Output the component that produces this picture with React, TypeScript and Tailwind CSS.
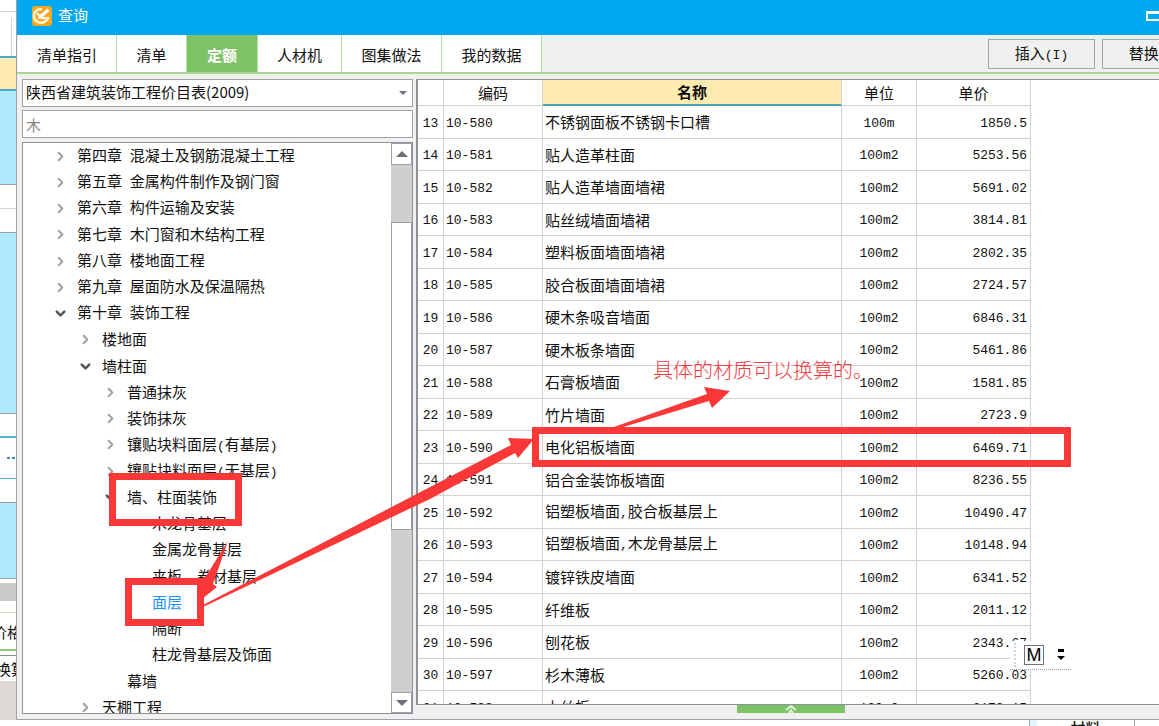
import React, { useState } from 'react';
import { ChevronDown, ChevronRight } from 'lucide-react';
import clsx from 'clsx';

interface TreeNode {
  label: string;
  level: number;
  state?: 'open' | 'closed';
}

const tabs = [
  { label: '清单指引', width: 'w-[99px]' },
  { label: '清单', width: 'w-[70px]' },
  { label: '定额', width: 'w-[71px]' },
  { label: '人材机', width: 'w-[84px]' },
  { label: '图集做法', width: 'w-[100px]' },
  { label: '我的数据', width: 'w-[100px]' },
];

const tree: TreeNode[] = [
  { label: '第四章 混凝土及钢筋混凝土工程', level: 0, state: 'closed' },
  { label: '第五章 金属构件制作及钢门窗', level: 0, state: 'closed' },
  { label: '第六章 构件运输及安装', level: 0, state: 'closed' },
  { label: '第七章 木门窗和木结构工程', level: 0, state: 'closed' },
  { label: '第八章 楼地面工程', level: 0, state: 'closed' },
  { label: '第九章 屋面防水及保温隔热', level: 0, state: 'closed' },
  { label: '第十章 装饰工程', level: 0, state: 'open' },
  { label: '楼地面', level: 1, state: 'closed' },
  { label: '墙柱面', level: 1, state: 'open' },
  { label: '普通抹灰', level: 2, state: 'closed' },
  { label: '装饰抹灰', level: 2, state: 'closed' },
  { label: '镶贴块料面层(有基层)', level: 2, state: 'closed' },
  { label: '镶贴块料面层(无基层)', level: 2, state: 'closed' },
  { label: '墙、柱面装饰', level: 2, state: 'open' },
  { label: '木龙骨基层', level: 3 },
  { label: '金属龙骨基层', level: 3 },
  { label: '夹板、卷材基层', level: 3 },
  { label: '面层', level: 3 },
  { label: '隔断', level: 3 },
  { label: '柱龙骨基层及饰面', level: 3 },
  { label: '幕墙', level: 2 },
  { label: '天棚工程', level: 1, state: 'closed' },
];

const rows = [
  ['13', '10-580', '不锈钢面板不锈钢卡口槽', '100m', '1850.5'],
  ['14', '10-581', '贴人造革柱面', '100m2', '5253.56'],
  ['15', '10-582', '贴人造革墙面墙裙', '100m2', '5691.02'],
  ['16', '10-583', '贴丝绒墙面墙裙', '100m2', '3814.81'],
  ['17', '10-584', '塑料板面墙面墙裙', '100m2', '2802.35'],
  ['18', '10-585', '胶合板面墙面墙裙', '100m2', '2724.57'],
  ['19', '10-586', '硬木条吸音墙面', '100m2', '6846.31'],
  ['20', '10-587', '硬木板条墙面', '100m2', '5461.86'],
  ['21', '10-588', '石膏板墙面', '100m2', '1581.85'],
  ['22', '10-589', '竹片墙面', '100m2', '2723.9'],
  ['23', '10-590', '电化铝板墙面', '100m2', '6469.71'],
  ['24', '10-591', '铝合金装饰板墙面', '100m2', '8236.55'],
  ['25', '10-592', '铝塑板墙面,胶合板基层上', '100m2', '10490.47'],
  ['26', '10-593', '铝塑板墙面,木龙骨基层上', '100m2', '10148.94'],
  ['27', '10-594', '镀锌铁皮墙面', '100m2', '6341.52'],
  ['28', '10-595', '纤维板', '100m2', '2011.12'],
  ['29', '10-596', '刨花板', '100m2', '2343.67'],
  ['30', '10-597', '杉木薄板', '100m2', '5260.03'],
  ['31', '10-598', '木丝板', '100m2', '6173.15'],
];

const indents = ['pl-[30px]', 'pl-[55px]', 'pl-[80px]', 'pl-[105px]'];

// latin runs use the narrow fixed-width face, chinese keeps the page font
const Mixed: React.FC<{ text: string }> = ({ text }) => (
  <span className="whitespace-pre">
    {text.split(/([ -~]+)/).map((part, i) =>
      i % 2 ? <span key={i} className="font-['Liberation_Mono',monospace] text-[13px]">{part}</span> : part
    )}
  </span>
);

const Backdrop: React.FC = () => (
  <div className="flex w-4 shrink-0 flex-col overflow-hidden whitespace-nowrap bg-white">
    <div className="h-3 border-b border-gray-300" />
    <div className="h-11 pt-1.5"><div className="ml-[11px] h-full border-l border-gray-300" /></div>
    <div className="h-[35px] border-y-2 border-[#4aa8d0] bg-[#fdebb0]" />
    <div className="h-[94px] border-b border-gray-400 bg-[#aee8fb]" />
    <div className="h-6 border-b border-gray-300" />
    <div className="h-6 border-b border-gray-400" />
    <div className="h-[181px] border-b border-gray-400 bg-[#aee8fb]" />
    <div className="h-6 border-b-2 border-[#5cb1d8]" />
    <div className="flex h-[41px] items-center justify-end gap-0.5 border-b border-[#5cb1d8] pr-px">
      <i className="h-0.5 w-[3px] bg-[#4a90c8]" />
      <i className="h-0.5 w-[3px] bg-[#4a90c8]" />
    </div>
    <div className="h-6 border-b border-gray-400" />
    <div className="h-[76px] border-b border-gray-400 bg-[#aee8fb]" />
    <div className="mt-1 h-[18px] bg-[#c9c9c9]" />
    <div className="h-3 border-b border-[#cfe5b8]" />
    <div className="h-[38px] border-b-2 border-[#8fca7a] text-[15px] leading-[38px]"><span className="-ml-2">价格</span></div>
    <div className="mt-1 h-[26px] border-t border-[#8c8ca0] text-[15px] leading-[26px]"><span className="-ml-1">换算</span></div>
    <div className="flex-1 bg-[#dcd9d6]" />
  </div>
);

const TitleBar: React.FC = () => (
  <header className="flex h-[35px] shrink-0 items-center bg-[#00a8f0] pl-[15px] text-white">
    <svg viewBox="0 0 20 20" className="-mt-1 mr-1.5 size-5">
      <rect width="20" height="20" rx="3" fill="#f5a623" />
      <path d="M10 3.5C5 2.500 1.500 6 2 10.500C2.500 15.500 7.500 18 12 16C14.500 15 16 13 16.500 11" fill="none" stroke="#fff3d0" strokeWidth="2.500" />
      <path d="M7 9.500L15.500 2.500L17.500 5L9 12.500L6 13Z" fill="#fff" />
      <path d="M5 7L8 10.500M9 12L14 12" stroke="#fff" strokeWidth="2" />
    </svg>
    <h1 className="-mt-1 text-[15px]">查询</h1>
    <button aria-label="最大化" className="-mr-1 -mt-1 ml-auto h-2.5 w-[17px] border-2 border-t-[3px] border-white" />
  </header>
);

const ScrollBar: React.FC = () => (
  <div className="flex w-[21px] shrink-0 flex-col bg-[#cfcfcf]">
    <button aria-label="向上" className="flex h-[22px] items-center justify-center border border-gray-400 bg-white">
      <i className="border-x-[6px] border-b-[6px] border-x-transparent border-b-[#6d6f7a]" />
    </button>
    <div className="h-[57px]" />
    <div className="h-[308px] border border-gray-400 bg-white" />
    <button aria-label="向下" className="mt-auto flex h-[21px] items-center justify-center border border-gray-400 bg-white">
      <i className="border-x-[6px] border-t-[6px] border-x-transparent border-t-[#6d6f7a]" />
    </button>
  </div>
);

const Annotations: React.FC = () => (
  <div className="pointer-events-none absolute inset-0">
    <div className="absolute left-[109px] top-[473px] h-[53px] w-[133px] border-[7px] border-[#fb3838]" />
    <div className="absolute left-[125px] top-[578px] h-12 w-[79px] border-[7px] border-[#fb3838]" />
    <div className="absolute left-[532px] top-[427px] h-10 w-[539px] border-[7px] border-[#fb3838]" />
    <svg width="760" height="640" className="absolute left-0 top-0" fill="#fb3838">
      <path d="M228 541L213 584L217 587L202 599L202 578L206 576Z" />
      <path d="M203 605L511 445L508 438L534 439L518 458L515 453L430 499L203 607Z" />
      <path d="M611 428L707 394L704 387L730 391L712 408L709 401L620 428Z" />
    </svg>
    <p className="absolute left-[653px] top-[355px] whitespace-nowrap text-xl font-light leading-[30px] text-[#f03a40]">具体的材质可以换算的。</p>
  </div>
);

const ImeBar: React.FC = () => (
  <div className="absolute left-[1010px] top-[641px] flex h-[29px] w-[61px] items-center border-b border-dotted border-gray-400 bg-white pl-1">
    <div className="h-6 border-l-2 border-dotted border-gray-300" />
    <div className="ml-2 flex size-5 items-center justify-center border border-gray-500 font-['Liberation_Sans',sans-serif] text-lg text-black">M</div>
    <svg width="8" height="12" className="ml-[13px]">
      <path d="M1 0H7V3H1ZM0 7H8L4 11Z" fill="#000" />
    </svg>
  </div>
);

const App: React.FC = () => {
  const [activeTab, setActiveTab] = useState('定额');
  const [selected, setSelected] = useState('面层');
  const [keyword, setKeyword] = useState('');

  return (
    <div className="relative flex h-screen flex-col overflow-hidden bg-white font-['Noto_Sans_CJK_SC',sans-serif] text-[15px] text-[#111]">
      <div className="flex min-h-0 flex-1">
        <Backdrop />
        <main className="flex min-w-0 flex-1 flex-col overflow-hidden border-b border-l border-[#a0a0a8] bg-[#f0f0f0]">
          <TitleBar />

          <div className="flex h-[39px] shrink-0 items-stretch border-b-2 border-[#add59a]">
            <nav className="flex shrink-0 pl-px">
              {tabs.map((tab) => (
                <button
                  key={tab.label}
                  onClick={() => setActiveTab(tab.label)}
                  className={clsx(
                    'border-r border-[#b5dfa5] pt-1',
                    tab.width,
                    activeTab === tab.label ? 'bg-[#7ec268] font-bold text-white' : 'bg-white'
                  )}
                >
                  {tab.label}
                </button>
              ))}
            </nav>
            <div className="-mr-[50px] ml-auto flex shrink-0 gap-[7px] pb-[3px] pt-1">
              <button className="w-[107px] border border-[#a5a5ad]"><Mixed text="插入(I)" /></button>
              <button className="w-[107px] border border-[#a5a5ad]"><Mixed text="替换(R)" /></button>
            </div>
          </div>

          <div className="flex min-h-0 flex-1 gap-[3px] border-t-2 border-[#e8f3e3] pb-[5px] pl-[5px] pt-[3px]">
            <aside className="flex w-[391px] shrink-0 flex-col">
              <div className="relative">
                <select aria-label="定额库" className="h-7 w-full appearance-none border border-[#a0a0a8] bg-white pb-0.5 pl-[3px]">
                  <option>陕西省建筑装饰工程价目表(2009)</option>
                </select>
                <i className="pointer-events-none absolute right-1.5 top-3 border-x-4 border-t-4 border-x-transparent border-t-[#6d6f7a]" />
              </div>
              <input
                aria-label="搜索"
                placeholder="木"
                value={keyword}
                onChange={(e) => setKeyword(e.target.value)}
                className="mt-[3px] h-7 shrink-0 border border-[#a0a0a8] bg-white px-[3px] placeholder:text-[#888]"
              />
              <div className="mt-1 flex min-h-0 flex-1 border border-[#8f9096] bg-white">
                <ul className="min-w-0 flex-1 overflow-hidden">
                  {tree.map((node) => (
                    <li key={node.label} className={clsx('h-[26px] nth-[4n]:h-[27px]', indents[node.level])}>
                      <button
                        onClick={() => setSelected(node.label)}
                        className={clsx('flex h-full items-center whitespace-nowrap', selected === node.label && 'text-[#1e8fff]')}
                      >
                        <span className="w-6 shrink-0">
                          {node.state === 'closed' && <ChevronRight size={15} strokeWidth={3} className="text-[#a0a0a0]" />}
                          {node.state === 'open' && <ChevronDown size={15} strokeWidth={4} className="text-[#555]" />}
                        </span>
                        <Mixed text={node.label} />
                      </button>
                    </li>
                  ))}
                </ul>
                <ScrollBar />
              </div>
            </aside>

            <section className="flex min-w-0 flex-1 flex-col">
              <div className="min-h-0 flex-1 overflow-hidden border-y border-l-2 border-[#8f9098] bg-white">
                <table className="w-[613px] table-fixed border-separate border-spacing-0">
                  <thead>
                    <tr className="h-[26px] *:border-b *:border-r *:border-[#d2d2d2] *:p-0 *:font-normal *:leading-6">
                      <th className="w-[26px]" />
                      <th className="w-[99px]">编码</th>
                      <th className="w-[299px] border-b-2! border-b-[#4aa3bd]! bg-[#fdebb0] font-bold!">名称</th>
                      <th className="w-[75px]">单位</th>
                      <th className="w-[114px]">单价</th>
                    </tr>
                  </thead>
                  <tbody>
                    {rows.map(([no, code, name, unit, price]) => (
                      <tr key={no} className="h-8 odd:h-[33px] *:border-b *:border-r *:border-[#d2d2d2] *:py-0 *:leading-6">
                        <td className="text-center"><Mixed text={no} /></td>
                        <td className="pl-0.5"><Mixed text={code} /></td>
                        <td className="pl-0.5"><Mixed text={name} /></td>
                        <td className="text-center"><Mixed text={unit} /></td>
                        <td className="pr-[3px] text-right"><Mixed text={price} /></td>
                      </tr>
                    ))}
                  </tbody>
                </table>
              </div>
              <button aria-label="展开" className="mb-px ml-[321px] flex h-2 w-[108px] shrink-0 justify-center bg-[#7ec268]">
                <svg width="12" height="8" fill="none" stroke="#e3f5dc" strokeWidth="2">
                  <path d="M1 5L6 1L11 5M4 8L6 5L8 8" />
                </svg>
              </button>
            </section>
          </div>
        </main>
      </div>

      <footer className="flex h-1.5 shrink-0 overflow-hidden">
        <div className="ml-[1029px] w-2 shrink-0 border-l border-[#8fa8a8] bg-[#e4f6fc]" />
        <div className="w-[98px] shrink-0 border-r border-gray-400 text-center font-medium leading-4">材料</div>
      </footer>

      <Annotations />
      <ImeBar />
    </div>
  );
};

export default App;
